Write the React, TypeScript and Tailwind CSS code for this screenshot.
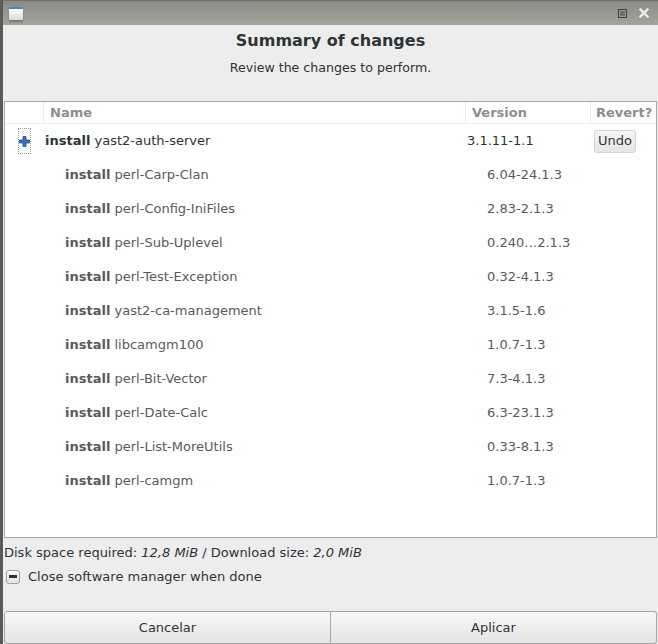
import React from "react";

const rows = [
  { name: "perl-Carp-Clan", version: "6.04-24.1.3" },
  { name: "perl-Config-IniFiles", version: "2.83-2.1.3" },
  { name: "perl-Sub-Uplevel", version: "0.240…2.1.3" },
  { name: "perl-Test-Exception", version: "0.32-4.1.3" },
  { name: "yast2-ca-management", version: "3.1.5-1.6" },
  { name: "libcamgm100", version: "1.0.7-1.3" },
  { name: "perl-Bit-Vector", version: "7.3-4.1.3" },
  { name: "perl-Date-Calc", version: "6.3-23.1.3" },
  { name: "perl-List-MoreUtils", version: "0.33-8.1.3" },
  { name: "perl-camgm", version: "1.0.7-1.3" },
];

function TitleBar() {
  return (
    <div className="flex h-[25px] items-center justify-between border-t border-[#6f706a] bg-gradient-to-b from-[#8a8b84] to-[#a3a59d] pl-[6px] pr-[9px]">
      <div className="h-[13px] w-[14px] rounded-[1px] border-t-2 border-[#4a80d0] bg-gradient-to-b from-white to-[#d8d8d8] shadow-[0_2px_2px_rgba(0,0,0,0.25)]" />
      <div className="flex items-center gap-[12px]">
        <div className="flex h-[9px] w-[9px] items-center justify-center border border-[#3e3e3e]">
          <div className="h-[5px] w-[5px] bg-[#6e6e6e]" />
        </div>
        <svg width="10" height="10" viewBox="0 0 10 10">
          <path d="M1.5 1.5L8.5 8.5M8.5 1.5L1.5 8.5" stroke="#eeeeee" strokeWidth="2.4" strokeLinecap="square" />
        </svg>
      </div>
    </div>
  );
}

export default function App() {
  return (
    <div
      className="flex h-[644px] w-[658px] flex-col overflow-hidden border-l-[3px] border-[#5a5a58] bg-[#ededed] text-[#2e3436]"
      style={{ fontFamily: '"DejaVu Sans", sans-serif' }}
    >
      <TitleBar />
      <div className="flex flex-1 flex-col pl-[1px] pr-[1px]">
        <div className="flex flex-col items-center pt-[6px]">
          <h1 className="text-[16px] font-bold leading-[20px] text-[#2e3436]">Summary of changes</h1>
          <p className="mt-[10px] text-[12.6px] leading-[14px] text-[#2e3436]">Review the changes to perform.</p>
        </div>

        <div className="mt-[26px] h-[437px] border border-[#a8a8a8] bg-white">
          <div className="flex h-[22px] items-center border-b border-[#ececec] text-[13px] font-bold text-[#8e8e8e]">
            <div className="w-[38px] h-full" />
            <div className="flex h-full flex-1 items-center border-l border-[#ececec] pl-[6px]">Name</div>
            <div className="flex h-full w-[125px] items-center border-l border-[#ececec] pl-[6px]">Version</div>
            <div className="flex h-full w-[66px] items-center border-l border-[#ececec] pl-[5px]">Revert?</div>
          </div>

          <div className="flex h-[34px] items-center text-[13px]">
            <div className="flex w-[38px] pl-[13px]">
              <div className="flex h-[26px] w-[13px] items-center justify-center border border-dotted border-[#9a9a9a]">
                <svg width="11" height="11" viewBox="0 0 11 11">
                  <path d="M4 0.5h3v3.5h3.5v3h-3.5v3.5h-3v-3.5h-3.5v-3h3.5z" fill="#3f6fb5" stroke="#1f4f95" strokeWidth="0.8" />
                </svg>
              </div>
            </div>
            <div className="flex-1 pl-[2px] text-[#2e3436]">
              <span className="font-bold">install</span> yast2-auth-server
            </div>
            <div className="w-[125px] pl-[2px] text-[#2e3436]">3.1.11-1.1</div>
            <div className="w-[66px] pl-[4px]">
              <button className="h-[23px] rounded-[3px] border border-[#d4d4d4] bg-gradient-to-b from-[#f6f6f6] to-[#e6e6e6] px-[3px] text-[13px] text-[#2e3436]">
                Undo
              </button>
            </div>
          </div>

          {rows.map((r) => (
            <div key={r.name} className="flex h-[34px] items-center text-[13px] text-[#5a5a5a]">
              <div className="w-[38px]" />
              <div className="flex-1 pl-[22px]">
                <span className="font-bold">install</span> {r.name}
              </div>
              <div className="w-[125px] pl-[22px]">{r.version}</div>
              <div className="w-[66px]" />
            </div>
          ))}
        </div>

        <div className="mt-[7px] text-[13px] leading-[16px] text-[#2e3436]">
          Disk space required: <i>12,8 MiB</i> / Download size: <i>2,0 MiB</i>
        </div>

        <label className="mt-[6px] flex items-center gap-[8px] pl-[2px] text-[13px] text-[#2e3436]">
          <span className="flex h-[14px] w-[14px] items-center justify-center rounded-[3px] border border-[#a0a0a0] bg-gradient-to-b from-[#fbfbfb] to-[#e4e4e4]">
            <span className="h-[3px] w-[8px] bg-[#2e3436]" />
          </span>
          Close software manager when done
        </label>

        <div className="mt-auto flex h-[33px]">
          <button className="flex-1 rounded-l-[3px] border border-[#a6a6a6] bg-gradient-to-b from-[#f8f8f8] to-[#e4e4e4] text-[13px] text-[#2e3436]">
            Cancelar
          </button>
          <button className="flex-1 rounded-r-[3px] border border-l-0 border-[#a6a6a6] bg-gradient-to-b from-[#f8f8f8] to-[#e4e4e4] text-[13px] text-[#2e3436]">
            Aplicar
          </button>
        </div>
      </div>
    </div>
  );
}
